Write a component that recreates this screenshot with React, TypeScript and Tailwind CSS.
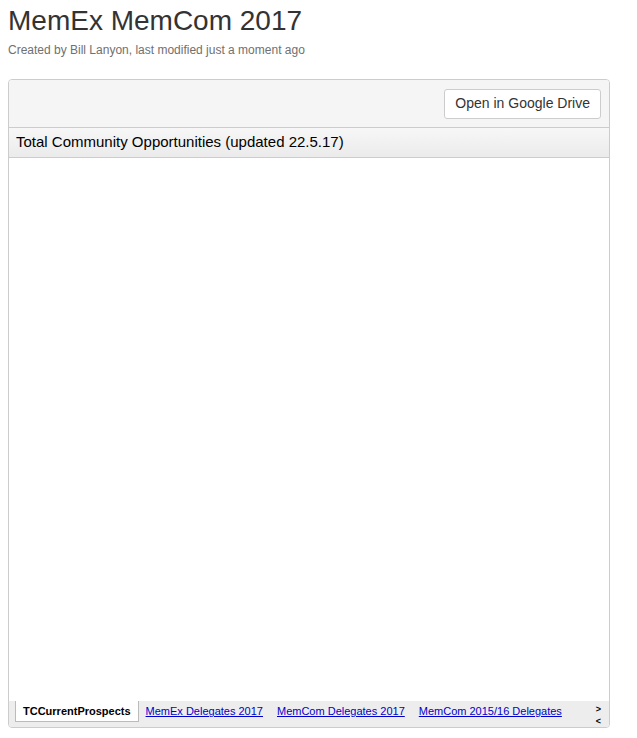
export default function App() {
  const tabs = ["MemEx Delegates 2017", "MemCom Delegates 2017", "MemCom 2015/16 Delegates"];

  return (
    <div className="bg-white min-h-screen px-2 pt-[3px] text-[#333] font-['Liberation_Sans',Arial,sans-serif]">
      {/* Page title */}
      <h1 className="text-[28px] leading-[36px] font-normal text-[#333]">MemEx MemCom 2017</h1>
      <p className="mt-[3px] text-[12px] leading-[16px] text-[#707070]">
        Created by Bill Lanyon, last modified just a moment ago
      </p>

      {/* Embedded sheet */}
      <div className="mt-[21px] w-[602px] h-[649px] flex flex-col border border-[#ccc] rounded-[4px] overflow-hidden">
        {/* Toolbar */}
        <div className="h-[47px] shrink-0 bg-[#f5f5f5] flex items-center justify-end pr-2">
          <button className="h-[30px] px-[10px] bg-white border border-[#ccc] rounded-[3px] text-[14px] text-[#333]">
            Open in Google Drive
          </button>
        </div>

        {/* Sheet title */}
        <div className="h-[31px] shrink-0 border-y border-[#ccc] bg-gradient-to-b from-[#f7f7f7] to-[#ebebeb] flex items-center px-[7px]">
          <span className="text-[15px] text-black">Total Community Opportunities (updated 22.5.17)</span>
        </div>

        {/* Body */}
        <div className="flex-1 bg-white" />

        {/* Tab strip */}
        <div className="h-[26px] shrink-0 bg-[#ededed] flex items-start pl-[6px] relative">
          <div className="h-[21px] px-[7px] bg-white border-x border-b border-[#bbb] flex items-center text-[11px] font-bold text-black">
            TCCurrentProspects
          </div>
          {tabs.map((t) => (
            <a key={t} href="#" className="h-[21px] px-[7px] flex items-center text-[11px] text-[#00c] underline">
              {t}
            </a>
          ))}
          <div className="absolute right-[8px] top-[2px] flex flex-col items-center text-[9px] leading-[12px] font-bold text-black">
            <span>&gt;</span>
            <span>&lt;</span>
          </div>
        </div>
      </div>
    </div>
  );
}
